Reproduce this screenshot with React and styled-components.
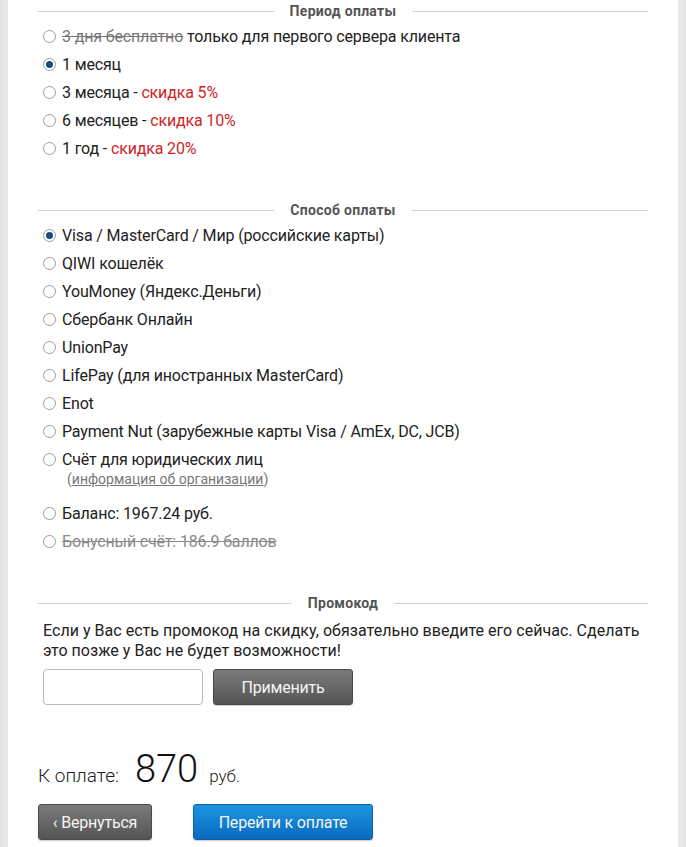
import React from "react";
import styled, { createGlobalStyle } from "styled-components";

const GlobalStyle = createGlobalStyle`
  html, body { margin: 0; padding: 0; }
  body {
    background: #e4e4e4;
    font-family: Roboto, "Noto Sans", Arial, sans-serif;
    color: #222;
  }
`;

const Page = styled.div`
  display: flex;
  justify-content: center;
  padding: 0 8px;
  min-height: 847px;
  background: linear-gradient(90deg, #e2e2e2 0, #ececec 8px, #ececec calc(100% - 8px), #e2e2e2 100%);
`;

const Panel = styled.div`
  flex: 1;
  background: #fff;
  padding: 1px 30px 20px;
  box-shadow: 0 0 2px rgba(0,0,0,0.08);
`;

const Section = styled.section`
  display: flex;
  flex-direction: column;
  margin-bottom: ${(p) => p.$mb ?? 37}px;
`;

const Legend = styled.div`
  display: flex;
  align-items: center;
  height: 20px;
  gap: 10px;
  margin-bottom: 2px;
  &::before, &::after {
    content: "";
    flex: 1;
    height: 1px;
    background: #cfcfcf;
  }
`;

const LegendText = styled.span`
  font-size: 14px;
  font-weight: 700;
  color: #555;
  letter-spacing: 0.3px;
  padding: 0 6px;
`;

const Option = styled.label`
  display: flex;
  align-items: flex-start;
  padding: 4px 0 4px 5px;
  font-size: 16px;
  line-height: 20px;
  letter-spacing: -0.15px;
  color: ${(p) => (p.$disabled ? "#8a8a8a" : "#222")};
  text-decoration: ${(p) => (p.$disabled ? "line-through" : "none")};
  cursor: pointer;
`;

const Radio = styled.input.attrs({ type: "radio" })`
  appearance: none;
  flex: none;
  width: 13px;
  height: 13px;
  margin: 3px 6px 0 0;
  border: 1px solid #9a9a9a;
  border-radius: 50%;
  background: #fff;
  position: relative;
  box-sizing: border-box;
  &:checked::after {
    content: "";
    position: absolute;
    left: 2px;
    top: 2px;
    width: 7px;
    height: 7px;
    border-radius: 50%;
    background: #174b7c;
  }
`;

const Strike = styled.span`
  color: #777;
  text-decoration: line-through;
`;

const Discount = styled.span`
  color: #d11f26;
`;

const SubNote = styled.span`
  font-size: 14px;
  line-height: 18px;
  color: #777;
  margin: -4px 0 12px 29px;
  a { color: #777; text-decoration: underline; }
`;

const PromoText = styled.p`
  margin: 6px 0 8px 5px;
  font-size: 16px;
  line-height: 20px;
  color: #222;
  letter-spacing: 0.03px;
`;

const PromoRow = styled.div`
  display: flex;
  gap: 10px;
  padding-left: 5px;
`;

const PromoInput = styled.input`
  width: 160px;
  height: 36px;
  box-sizing: border-box;
  border: 1px solid #bdbdbd;
  border-radius: 4px;
  padding: 0 8px;
  font-size: 16px;
  font-family: inherit;
`;

const Button = styled.button`
  height: 36px;
  width: ${(p) => p.$w}px;
  box-sizing: border-box;
  border: 1px solid ${(p) => (p.$blue ? "#0e5fa8" : "#4a4a4a")};
  border-radius: 3px;
  background: ${(p) =>
    p.$blue
      ? "linear-gradient(#1b95e0, #0a6ac0)"
      : "linear-gradient(#7a7a7a, #555)"};
  color: #f4f4f4;
  font-family: inherit;
  font-size: 16px;
  letter-spacing: -0.2px;
  box-shadow: 0 1px 1px rgba(0,0,0,0.2);
  cursor: pointer;
`;

const Total = styled.div`
  display: flex;
  align-items: baseline;
  margin-top: 42px;
  font-weight: 300;
`;

const TotalLabel = styled.span`
  font-size: 19px;
  color: #222;
  margin-right: 16px;
`;

const TotalSum = styled.span`
  font-size: 38px;
  color: #111;
  line-height: 44px;
  margin-right: 11px;
`;

const TotalCur = styled.span`
  font-size: 17px;
  color: #222;
`;

const Actions = styled.div`
  display: flex;
  gap: 41px;
  margin-top: 13px;
`;

const periods = [
  { id: "trial", label: <><Strike>3 дня бесплатно</Strike> только для первого сервера клиента</> },
  { id: "m1", label: "1 месяц", checked: true },
  { id: "m3", label: <>3 месяца - <Discount>скидка 5%</Discount></> },
  { id: "m6", label: <>6 месяцев - <Discount>скидка 10%</Discount></> },
  { id: "y1", label: <>1 год - <Discount>скидка 20%</Discount></> },
];

const methods = [
  { id: "card", label: "Visa / MasterCard / Мир (российские карты)", checked: true },
  { id: "qiwi", label: "QIWI кошелёк" },
  { id: "yoo", label: "YouMoney (Яндекс.Деньги)" },
  { id: "sber", label: "Сбербанк Онлайн" },
  { id: "union", label: "UnionPay" },
  { id: "life", label: "LifePay (для иностранных MasterCard)" },
  { id: "enot", label: "Enot" },
  { id: "nut", label: "Payment Nut (зарубежные карты Visa / AmEx, DC, JCB)" },
  { id: "inv", label: "Счёт для юридических лиц", note: true },
  { id: "bal", label: "Баланс: 1967.24 руб." },
  { id: "bonus", label: "Бонусный счёт: 186.9 баллов", disabled: true },
];

export default function App() {
  return (
    <>
      <GlobalStyle />
      <Page>
        <Panel>
          <Section>
            <Legend><LegendText>Период оплаты</LegendText></Legend>
            {periods.map((p) => (
              <Option key={p.id}>
                <Radio name="period" defaultChecked={p.checked} />
                <span>{p.label}</span>
              </Option>
            ))}
          </Section>
          <Section>
            <Legend><LegendText>Способ оплаты</LegendText></Legend>
            {methods.map((m) => (
              <React.Fragment key={m.id}>
                <Option $disabled={m.disabled}>
                  <Radio name="method" defaultChecked={m.checked} disabled={m.disabled} />
                  <span>{m.label}</span>
                </Option>
                {m.note && (
                  <SubNote>
                    (<a href="#org">информация об организации</a>)
                  </SubNote>
                )}
              </React.Fragment>
            ))}
          </Section>
          <Section $mb={0}>
            <Legend><LegendText>Промокод</LegendText></Legend>
            <PromoText>
              Если у Вас есть промокод на скидку, обязательно введите его сейчас. Сделать это позже у Вас не будет возможности!
            </PromoText>
            <PromoRow>
              <PromoInput />
              <Button $w={140}>Применить</Button>
            </PromoRow>
          </Section>
          <Total>
            <TotalLabel>К оплате:</TotalLabel>
            <TotalSum>870</TotalSum>
            <TotalCur>руб.</TotalCur>
          </Total>
          <Actions>
            <Button $w={114}>‹ Вернуться</Button>
            <Button $blue $w={180}>Перейти к оплате</Button>
          </Actions>
        </Panel>
      </Page>
    </>
  );
}
